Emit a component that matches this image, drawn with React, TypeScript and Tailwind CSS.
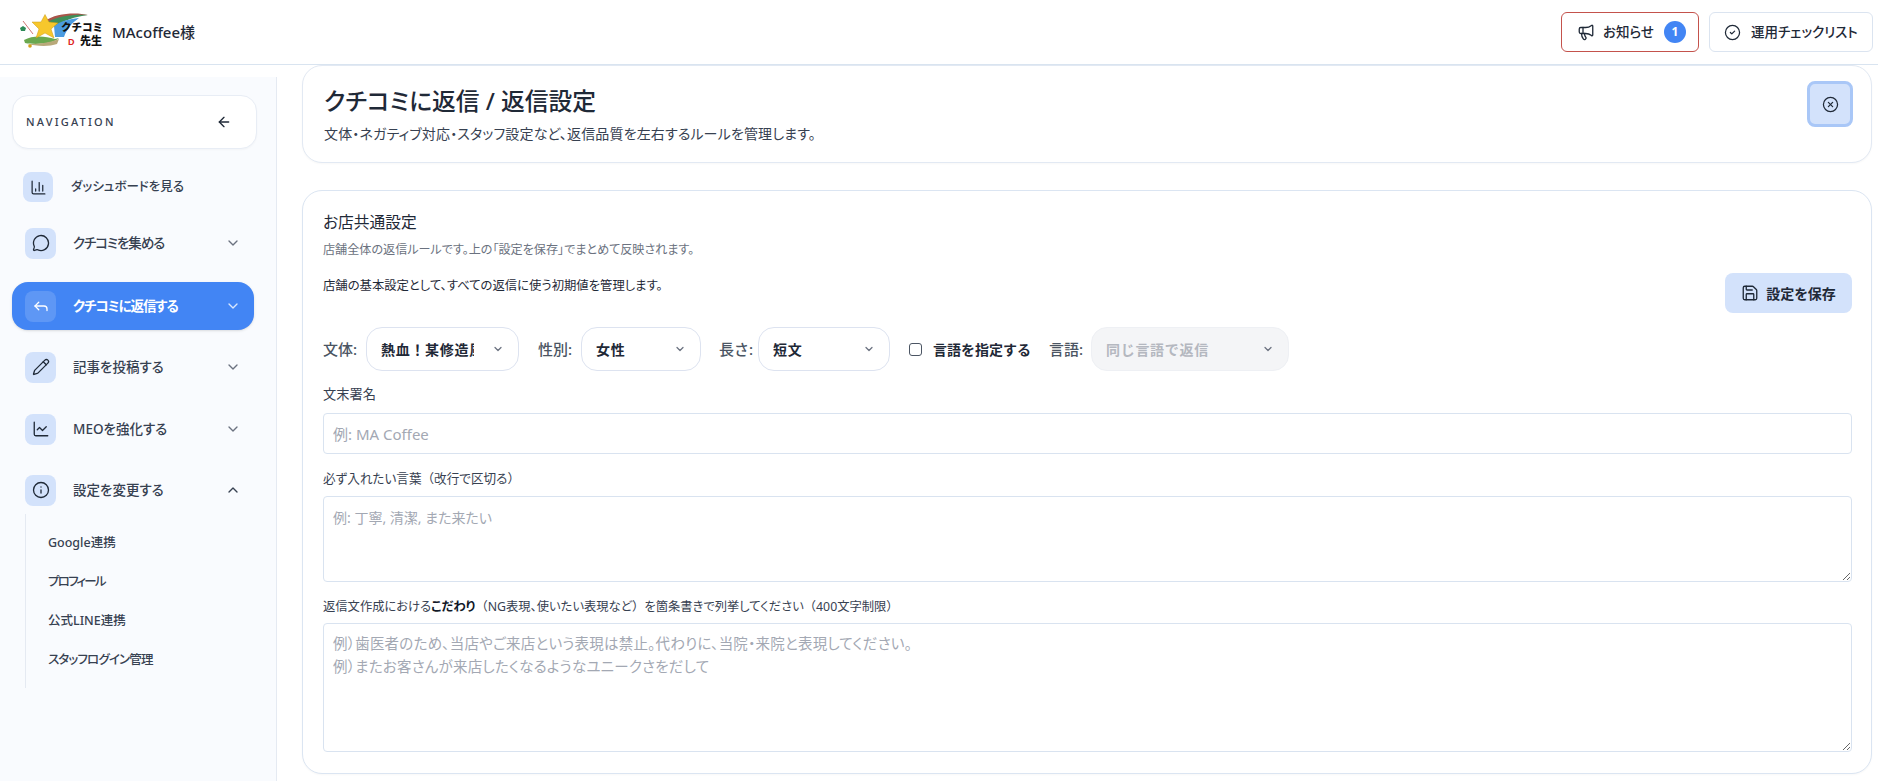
import React from "react";
import {
  ArrowLeft, ChartColumn, MessageCircle, ChevronDown, ChevronUp, Reply, Pencil, ChartLine, Info,
  Megaphone, CircleCheck, CircleX, Save,
} from "lucide-react";

function Logo() {
  return (
    <svg width="86" height="38" viewBox="0 0 86 38" className="shrink-0">
      <path d="M26 8 C36 0 58 -1 69 2 C56 2 44 5 35 12 Z" fill="#a9554a" />
      <path d="M29 9 C38 3 56 1 69 2 C56 4 44 7 36 14 Z" fill="#3f8f5a" />
      <path d="M35 13 C42 8 50 6 60 5 C53 10 48 15 45 24 L36 24 Z" fill="#4b9be0" />
      <path d="M5 27 C14 22 26 23 36 26 L40 25 C34 31 16 32 6 30 Z" fill="#6aa84f" />
      <path d="M8 31 C20 31 30 30 40 26 L38 31 C30 34 16 33 8 31 Z" fill="#b9a97a" />
      <path d="M4 8 L14 21" stroke="#c0504d" strokeWidth="0.8" />
      <path d="M1 15 l3 -2 3 2 -1 3 -4 0 z" fill="#2e8b57" />
      <circle cx="11" cy="33" r="1.8" fill="#d4a017" />
      <path d="M26 1.5 L30 9 L39 10 L32 16 L35 25 L26 20 L17 25 L20 16 L13 9 L22 9 Z" fill="#f7c72c" stroke="#c89b12" strokeWidth="0.5" />
      <text x="42" y="18" fontSize="10.5" fontWeight="900" fill="#111" fontFamily="'Noto Sans CJK JP',sans-serif">クチコミ</text>
      <text x="61" y="32" fontSize="11" fontWeight="900" fill="#111" fontFamily="'Noto Sans CJK JP',sans-serif">先生</text>
      <text x="49" y="32" fontSize="9" fontWeight="900" fill="#d22" fontFamily="'Liberation Sans',sans-serif">D</text>
    </svg>
  );
}

function NavItem({ icon: Icon, label, open, active, tight }: { icon: any; label: string; open?: boolean; active?: boolean; tight?: boolean }) {
  return (
    <div className={active
      ? "mr-[3px] flex h-12 items-center rounded-2xl bg-[#4285f4] pl-[13px] pr-[13px] text-white shadow-sm"
      : "flex h-12 items-center pl-[13px] pr-[16px] text-[#374151]"}>
      <span className={active
        ? "flex h-[31px] w-[31px] items-center justify-center rounded-lg bg-white/15"
        : "flex h-[31px] w-[31px] items-center justify-center rounded-lg bg-[#d3e2fb] text-[#1f2937]"}>
        <Icon size={18} strokeWidth={1.75} />
      </span>
      <span className={`ml-[17px] flex-1 text-[13.5px] [font-feature-settings:'palt'] ${active ? "font-bold" : "font-medium"} ${tight ? "tracking-[-1.1px]" : ""}`}>{label}</span>
      {open
        ? <ChevronUp size={16} className="text-[#374151]" />
        : <ChevronDown size={16} className={active ? "text-white/80" : "text-[#6b7280]"} />}
    </div>
  );
}

function Select({ text, w, disabled }: { text: string; w: string; disabled?: boolean }) {
  return (
    <div className={`flex h-11 items-center rounded-2xl border px-[14px] ${w} ${disabled ? "border-[#eef0f4] bg-[#f4f5f7] text-[#b4b8c0]" : "border-[#dde3f0] bg-white text-[#1f2937]"}`}>
      <span className="flex-1 overflow-hidden whitespace-nowrap text-[14px] font-semibold tracking-[0.05em]">{text}</span>
      <ChevronDown size={12} strokeWidth={2.5} className="ml-[18px] shrink-0 text-[#6b7280]" />
    </div>
  );
}

const W = ({ children }: { children: string }) => <span className="[font-feature-settings:normal]">{children}</span>;

export default function App() {
  return (
    <div className="flex h-screen flex-col overflow-hidden bg-white font-['Noto_Sans','Noto_Sans_CJK_JP',sans-serif] text-[#1f2937]">
      <header className="flex h-[65px] shrink-0 items-center border-b border-[#d9e4f0] pl-[19px] pr-[5px]">
        <Logo />
        <span className="ml-[7px] text-[15px] font-medium text-[#1f2937]">MAcoffee様</span>
        <div className="ml-auto flex gap-[10px]">
          <button className="flex h-[40px] w-[138px] items-center rounded-md border border-[#c4524c] pl-[15px] text-[13.5px] font-medium">
            <Megaphone size={18} strokeWidth={1.75} />
            <span className="ml-[8px] [font-feature-settings:'palt']">お知らせ</span>
            <span className="ml-[10px] flex h-[22px] w-[22px] items-center justify-center rounded-full bg-[#4285f4] text-[12px] font-bold text-white">1</span>
          </button>
          <button className="flex h-[40px] w-[164px] items-center rounded-md border border-[#dbe4f0] pl-[14px] text-[13.5px] font-medium">
            <CircleCheck size={17} strokeWidth={1.75} />
            <span className="ml-[10px] [font-feature-settings:'palt']">運用チェックリスト</span>
          </button>
        </div>
      </header>
      <div className="flex min-h-0 flex-1">
        <aside className="mt-[12px] w-[277px] shrink-0 border-r border-[#e5eaf2] bg-[#f9fbfe] pl-[12px] pr-[19px] pt-[18px]">
          <div className="flex h-[54px] items-center justify-between rounded-2xl border border-[#e8edf5] bg-white pl-[13px] pr-[24px] shadow-[0_1px_2px_rgba(0,0,0,0.03)]">
            <span className="text-[11px] font-medium tracking-[0.2em] text-[#374151]">NAVIGATION</span>
            <ArrowLeft size={16} />
          </div>
          <div className="mt-[23px] flex h-[30px] items-center pl-[11px] text-[#374151]">
            <span className="flex h-[30px] w-[30px] items-center justify-center rounded-lg bg-[#d3e2fb] text-[#1f2937]">
              <ChartColumn size={17} strokeWidth={1.75} />
            </span>
            <span className="ml-[18px] text-[12.5px] font-medium [font-feature-settings:'palt']">ダッシュボードを見る</span>
          </div>
          <div className="mt-[17px]"><NavItem icon={MessageCircle} label="クチコミを集める" tight /></div>
          <div className="mt-[15px]"><NavItem icon={Reply} label="クチコミに返信する" active tight /></div>
          <div className="mt-[13px]"><NavItem icon={Pencil} label="記事を投稿する" /></div>
          <div className="mt-[14px]"><NavItem icon={ChartLine} label="MEOを強化する" /></div>
          <div className="mt-[13px]"><NavItem icon={Info} label="設定を変更する" open /></div>
          <div className="ml-[13px] flex h-[174px] flex-col border-l border-[#e5eaf2] pl-[22px] pt-[10px] text-[12.5px] font-medium text-[#374151] [font-feature-settings:'palt']">
            <div className="flex h-[39px] items-center">Google連携</div>
            <div className="flex h-[39px] items-center tracking-[-1.8px]">プロフィール</div>
            <div className="flex h-[39px] items-center">公式LINE連携</div>
            <div className="flex h-[39px] items-center tracking-[-0.85px]">スタッフログイン管理</div>
          </div>
        </aside>
        <main className="min-w-0 flex-1 pl-[25px] pr-[6px]">
          <section className="flex h-[98px] items-start justify-between rounded-[20px] border border-[#e2e9f3] bg-white pl-[21px] pr-[18px] shadow-[0_1px_2px_rgba(0,0,0,0.03)]">
            <div className="pt-[16px]">
              <h1 className="text-[23.75px] font-medium leading-[38px] text-[#1f2937] [font-feature-settings:'palt']">クチコミに返信 / 返信設定</h1>
              <p className="mt-[4px] text-[14px] leading-[20px] tracking-[0.01em] text-[#374151] [font-feature-settings:'palt']">文体・ネガティブ対応・スタッフ設定など、返信品質を左右するルールを管理します。</p>
            </div>
            <button className="mt-[15px] flex h-[46px] w-[46px] items-center justify-center rounded-lg border-[3px] border-[#a9c7f7] bg-[#d3e2fb]">
              <CircleX size={17} strokeWidth={1.75} />
            </button>
          </section>
          <section className="mt-[27px] h-[584px] rounded-[20px] border border-[#dbe5f2] bg-white pl-[20px] pr-[19px] pt-[20px] shadow-[0_1px_2px_rgba(0,0,0,0.03)]">
            <div className="flex items-start justify-between">
              <div>
                <h2 className="text-[15.75px] font-normal leading-[22px] text-[#1f2937] [font-feature-settings:'palt']">お店共通設定</h2>
                <p className="mt-[9px] text-[12.1px] leading-[16px] text-[#6b7280] [font-feature-settings:'palt']">店舗全体の返信ルールです。上の「設定を保存」でまとめて反映されます。</p>
                <p className="mt-[20px] text-[12.35px] leading-[16px] text-[#1f2937] [font-feature-settings:'palt']">店舗の基本設定として、すべての返信に使う初期値を管理します。</p>
              </div>
              <button className="mt-[62px] flex h-[40px] w-[127px] items-center justify-center gap-[7px] rounded-lg bg-[#d3e2fb] text-[14px] font-semibold text-[#1f2937] [font-feature-settings:'palt']">
                <Save size={18} strokeWidth={1.75} />設定を保存
              </button>
            </div>
            <div className="mt-[14px] flex items-center text-[15px] text-[#4b5563]">
              <span className="w-[43px] shrink-0 font-medium">文体:</span>
              <Select text="熱血！某修造風" w="w-[153px]" />
              <span className="ml-[19px] w-[43px] shrink-0 font-medium">性別:</span>
              <Select text="女性" w="w-[120px]" />
              <span className="ml-[18px] w-[39px] shrink-0 font-medium">長さ:</span>
              <Select text="短文" w="w-[132px]" />
              <span className="ml-[19px] h-[13px] w-[13px] shrink-0 rounded-[3px] border border-[#4b5563] bg-white" />
              <span className="ml-[11px] w-[116px] shrink-0 text-[14px] font-semibold text-[#1f2937]">言語を指定する</span>
              <span className="w-[42px] shrink-0 font-medium">言語:</span>
              <Select text="同じ言語で返信" w="w-[198px]" disabled />
            </div>
            <label className="mt-[14px] block text-[13.25px] leading-[18px] text-[#374151]">文末署名</label>
            <input className="mt-[10px] block h-[41px] w-full rounded border border-[#d9e3f0] px-[9px] text-[15px] outline-none placeholder:text-[#a3a8b3]" placeholder="例: MA Coffee" />
            <label className="mt-[16px] block text-[12.6px] leading-[18px] text-[#374151] [font-feature-settings:'palt']">必ず入れたい言葉<W>（</W>改行で区切る<W>）</W></label>
            <textarea className="mt-[8px] block h-[86px] w-full rounded border border-[#d9e3f0] px-[9px] py-[9px] text-[14px] leading-[23px] outline-none placeholder:text-[#a3a8b3] [font-feature-settings:'palt']" placeholder="例: 丁寧, 清潔, また来たい" />
            <label className="mt-[16px] block text-[12.3px] leading-[18px] text-[#374151] [font-feature-settings:'palt']">返信文作成における<b className="font-semibold text-[#111827]">こだわり</b><W>（</W>NG表現、使いたい表現など<W>）</W>を箇条書きで列挙してください<W>（</W>400文字制限<W>）</W></label>
            <textarea className="mt-[7px] block h-[129px] w-full rounded border border-[#d9e3f0] px-[9px] py-[8px] text-[14.5px] leading-[23px] tracking-[0.015em] outline-none placeholder:text-[#a3a8b3] [font-feature-settings:'palt']" placeholder={"例）歯医者のため、当店やご来店という表現は禁止。代わりに、当院・来院と表現してください。\n例）またお客さんが来店したくなるようなユニークさをだして"} />
          </section>
        </main>
      </div>
    </div>
  );
}
